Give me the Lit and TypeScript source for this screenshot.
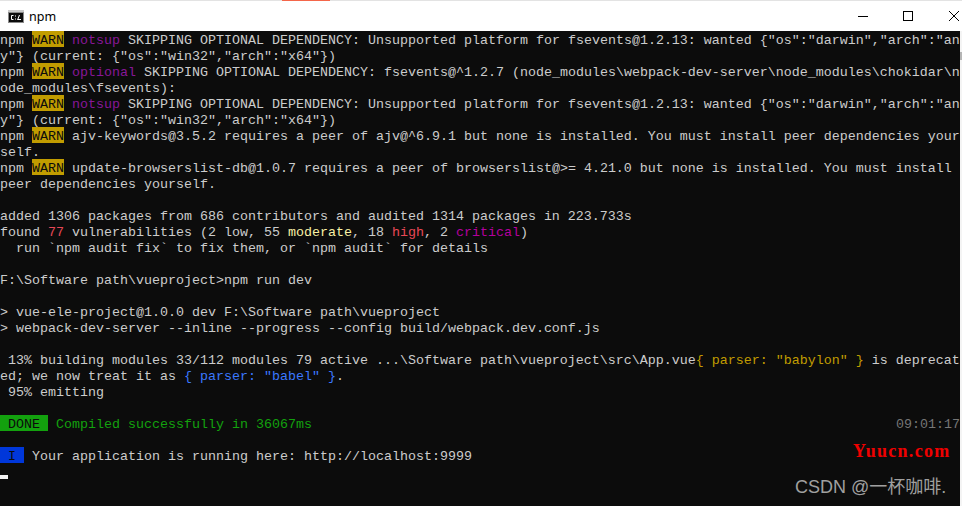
import { LitElement, html, css } from "lit";
import { customElement } from "lit/decorators.js";

type Seg = string | [string, string];
const warn: Seg = ["WARN", "warn"];
const skip = 'SKIPPING OPTIONAL DEPENDENCY: ';
const notsup: Seg[] = ["npm ", warn, " ", ["notsup", "purple"], ` ${skip}Unsupported platform for fsevents@1.2.13: wanted {"os":"darwin","arch":"an`];
const cur: Seg[] = ['y"} (current: {"os":"win32","arch":"x64"})'];

const rows: Seg[][] = [
  notsup,
  cur,
  ["npm ", warn, " ", ["optional", "purple"], ` ${skip}fsevents@^1.2.7 (node_modules\\webpack-dev-server\\node_modules\\chokidar\\n`],
  ["ode_modules\\fsevents):"],
  notsup,
  cur,
  ["npm ", warn, " ajv-keywords@3.5.2 requires a peer of ajv@^6.9.1 but none is installed. You must install peer dependencies your"],
  ["self."],
  ["npm ", warn, " update-browserslist-db@1.0.7 requires a peer of browserslist@>= 4.21.0 but none is installed. You must install"],
  ["peer dependencies yourself."],
  [],
  ["added 1306 packages from 686 contributors and audited 1314 packages in 223.733s"],
  ["found ", ["77", "red"], " vulnerabilities (2 low, 55 ", ["moderate", "pale"], ", 18 ", ["high", "red"], ", 2 ", ["critical", "magenta"], ")"],
  ["  run `npm audit fix` to fix them, or `npm audit` for details"],
  [],
  ["F:\\Software path\\vueproject>npm run dev"],
  [],
  ["> vue-ele-project@1.0.0 dev F:\\Software path\\vueproject"],
  ["> webpack-dev-server --inline --progress --config build/webpack.dev.conf.js"],
  [],
  [" 13% building modules 33/112 modules 79 active ...\\Software path\\vueproject\\src\\App.vue", ['{ parser: "babylon" }', "amber"], " is deprecat"],
  ["ed; we now treat it as ", ['{ parser: "babel" }', "blue"], "."],
  [" 95% emitting"],
  [],
];

@customElement("app-root")
export class AppRoot extends LitElement {
  static styles = css`
    :host { display: block; width: 962px; height: 506px; overflow: hidden; background: #fff; }
    .edge { display: flex; height: 1px; background: #e3e3e3; }
    .edge i { display: block; width: 48px; margin-left: 282px; background: #f4664a; }
    .title { display: flex; align-items: center; height: 30px; padding: 0 3px 0 8px; box-sizing: border-box;
      background: #fff; color: #000; font: 12.5px "Noto Sans", "Open Sans", sans-serif; }
    .app-icon { display: block; }
    .name { margin-left: 5px; flex: 1; }
    .controls { display: flex; align-items: center; gap: 35px; }
    .controls svg { display: block; }
    .controls .close { margin-left: 1px; }
    .body { display: flex; height: 475px; }
    .console { position: relative; width: 960px; height: 475px; overflow: hidden; background: #0c0c0c; color: #cccccc;
      font: 13.333px/20px "Liberation Mono", monospace; }
    .rail { width: 2px; background: #f4f4f4; }
    .rail i { display: block; height: 8px; margin-top: 21px; background: #b5b5b5; }
    .row { height: 16px; white-space: pre; }
    .row.split { display: flex; justify-content: space-between; }
    .warn, .done, .info { display: inline-block; height: 16px; color: #0c0c0c; }
    .warn { background: #c19c00; }
    .done { background: #13a10e; }
    .info { background: #0037da; }
    .purple { color: #881798; }
    .red { color: #e74856; }
    .pale { color: #f9f1a5; }
    .magenta { color: #b4009e; }
    .amber { color: #c19c00; }
    .blue { color: #3b78ff; }
    .green { color: #13a10e; }
    .time { color: #767676; }
    .cursor-row { display: flex; align-items: flex-end; }
    .cursor { width: 8px; height: 4px; background: #f2f2f2; }
    .mark-site { position: absolute; left: 853px; top: 410px; color: #f00000;
      font: bold 18px/20px "Liberation Serif", serif; letter-spacing: 1.3px; }
    .mark-csdn { position: absolute; left: 795px; top: 445px; color: #a0a0a0; white-space: pre;
      font: 18px/22px "Liberation Sans", "Noto Sans CJK SC", sans-serif; }
  `;

  private seg(s: Seg) {
    return typeof s === "string" ? s : html`<span class=${s[1]}>${s[0]}</span>`;
  }

  render() {
    return html`
      <div class="edge"><i></i></div>
      <div class="title">
        <svg class="app-icon" width="16" height="13" viewBox="0 0 16 13">
          <rect x="0" y="0" width="16" height="13" fill="#8a8a8a" />
          <rect x="0" y="0" width="16" height="2" fill="#c9c9c9" />
          <rect x="1" y="3" width="14" height="9" fill="#0c0c0c" />
          <path d="M5.5 5.5H3.5V9.5H5.5M7 6h1M7 9h1M11.5 5l-2 5M10 9.5h3" fill="none" stroke="#fff" stroke-width="1" />
        </svg>
        <span class="name">npm</span>
        <div class="controls">
          <svg width="10" height="10" viewBox="0 0 10 10"><path d="M0 5.5H10" stroke="#000" /></svg>
          <svg width="10" height="10" viewBox="0 0 10 10"><rect x="0.5" y="0.5" width="9" height="9" fill="none" stroke="#000" /></svg>
          <svg class="close" width="10" height="10" viewBox="0 0 10 10"><path d="M0 0L10 10M10 0L0 10" stroke="#000" /></svg>
        </div>
      </div>
      <div class="body">
        <div class="console">
          ${rows.map((r) => html`<div class="row">${r.map((s) => this.seg(s))}</div>`)}
          <div class="row split">
            <span><span class="done"> DONE </span> <span class="green">Compiled successfully in 36067ms</span></span>
            <span class="time">09:01:17</span>
          </div>
          <div class="row"></div>
          <div class="row"><span class="info"> I </span> Your application is running here: http://localhost:9999</div>
          <div class="row cursor-row"><div class="cursor"></div></div>
          <div class="mark-site">Yuucn.com</div>
          <div class="mark-csdn">CSDN @一杯咖啡.</div>
        </div>
        <div class="rail"><i></i></div>
      </div>
    `;
  }
}
